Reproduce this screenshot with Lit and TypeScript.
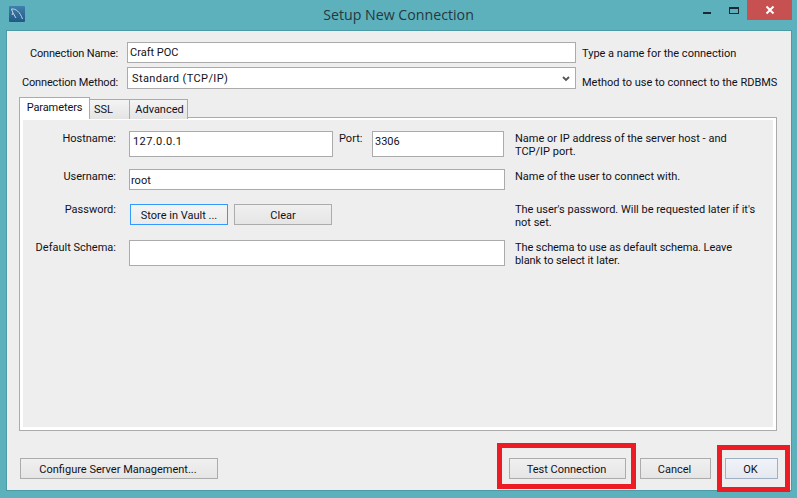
import { LitElement, html, css } from 'lit';
import { customElement } from 'lit/decorators.js';

@customElement('app-root')
export class AppRoot extends LitElement {
  static styles = css`
    :host {
      display: block;
      width: 797px;
      height: 498px;
      background: #5cb1bc;
      font-family: Roboto, 'Noto Sans', sans-serif;
      font-size: 11px;
      line-height: 14px;
      color: #111119;
      overflow: hidden;
      position: relative;
    }
    .titlebar {
      height: 30px;
      display: grid;
      grid-template-columns: 1fr auto 1fr;
    }
    .logo {
      width: 16px;
      height: 16px;
      margin: 6px 0 0 9px;
      display: block;
    }
    .title {
      font-family: 'Open Sans', sans-serif;
      font-size: 14.2px;
      line-height: 30px;
      color: #27383d;
    }
    .controls {
      display: flex;
      justify-content: flex-end;
      align-items: flex-start;
      margin-right: 5px;
    }
    .min {
      width: 8px;
      height: 2px;
      background: #1a2a30;
      margin: 12px 18px 0 0;
    }
    .max {
      box-sizing: border-box;
      width: 10px;
      height: 7px;
      border: 1px solid #1a2a30;
      border-top-width: 2px;
      margin: 7px 8px 0 0;
    }
    .close {
      width: 45px;
      height: 20px;
      background: #c75050;
      display: flex;
      align-items: center;
      justify-content: center;
    }
    .window {
      box-sizing: border-box;
      margin: 0 5px 0 6px;
      height: 461px;
      background: #eeeeee;
      border: 1px solid #4c9aa5;
      padding: 11px 13px 0 12px;
    }
    .top-row {
      display: grid;
      grid-template-columns: 108px 449px 1fr;
      height: 21px;
    }
    .top-row + .top-row {
      margin-top: 4px;
      height: 22px;
    }
    .top-label {
      text-align: right;
      padding: 5px 9px 0 0;
      white-space: nowrap;
      letter-spacing: -0.15px;
    }
    .hint {
      padding: 5px 0 0 6px;
      white-space: nowrap;
    }
    .top-row + .top-row .top-label,
    .top-row + .top-row .hint {
      padding-top: 9px;
    }
    .input {
      box-sizing: border-box;
      background: #fff;
      border: 1px solid #ababab;
      white-space: nowrap;
    }
    .name {
      height: 21px;
      line-height: 20px;
      padding-left: 2px;
    }
    .method {
      height: 22px;
      padding: 2px 5px 0 4px;
      display: flex;
      justify-content: space-between;
      align-items: center;
      letter-spacing: 0.4px;
    }
    .tabs {
      display: flex;
      align-items: flex-start;
      height: 20px;
      margin-top: 8px;
      position: relative;
    }
    .tab {
      box-sizing: border-box;
      height: 20px;
      margin-top: 2px;
      margin-left: -1px;
      border: 1px solid #ababab;
      border-bottom: none;
      background: linear-gradient(#f4f4f4, #e4e4e4);
      line-height: 20px;
      text-align: center;
    }
    .tab.on {
      width: 71px;
      height: 22px;
      margin: 0;
      background: #fff;
      line-height: 19px;
      letter-spacing: -0.1px;
      position: relative;
      z-index: 1;
    }
    .tab.ssl {
      width: 41px;
      text-align: left;
      padding-left: 4px;
    }
    .tab.adv {
      width: 59px;
      padding-left: 2px;
    }
    .panel {
      box-sizing: border-box;
      width: 758px;
      height: 314px;
      border: 1px solid #ababab;
      background: #eeeeee;
      box-shadow: inset 3px 0 0 #fff, inset -3px 0 0 #fff, inset 0 -3px 0 #fff, inset 0 2px 0 #fff;
      padding-top: 13px;
    }
    .row {
      display: grid;
      grid-template-columns: 109px 376px 1fr;
    }
    .row .label {
      text-align: right;
      padding: 1px 13px 0 0;
      white-space: nowrap;
    }
    .row .help {
      padding: 1px 0 0 10px;
      line-height: 13px;
      width: 241px;
    }
    .host { margin-bottom: 12px; height: 26px; }
    .user { margin-bottom: 12px; height: 21px; }
    .pass { margin-bottom: 15px; height: 23px; }
    .schema { height: 26px; }
    .schema .help { letter-spacing: -0.08px; }
    .field-group {
      display: flex;
    }
    .tall {
      height: 26px;
      line-height: 19px;
    }
    .host-input {
      width: 204px;
      padding-left: 3px;
      letter-spacing: 0.4px;
    }
    .port-label {
      width: 39px;
      padding: 1px 0 0 6px;
      box-sizing: border-box;
    }
    .port-input {
      width: 132px;
      padding-left: 2px;
    }
    .user-input {
      height: 21px;
      line-height: 21px;
      padding-left: 1px;
    }
    .buttons {
      display: flex;
      gap: 6px;
      padding: 2px 0 0 1px;
    }
    .btn {
      box-sizing: border-box;
      height: 21px;
      line-height: 18px;
      padding-top: 2px;
      border: 1px solid #acacac;
      background: linear-gradient(#f0f0f0, #e5e5e5);
      text-align: center;
      white-space: nowrap;
    }
    .btn.store {
      width: 98px;
      border-color: #3399ff;
      background: linear-gradient(#f4f4f4, #ebebeb);
    }
    .btn.clear {
      width: 98px;
    }
    .actions {
      display: flex;
      justify-content: space-between;
      width: 759px;
      margin-top: 27px;
      padding-left: 1px;
      box-sizing: border-box;
    }
    .actions .btn {
      padding-right: 2px;
    }
    .right-actions {
      display: flex;
      gap: 14px;
    }
    .btn.configure { width: 198px; }
    .btn.test { width: 117px; }
    .btn.cancel { width: 71px; }
    .btn.ok {
      width: 53px;
      border-color: #9fb0c5;
      background: linear-gradient(#f0f4f9, #e5e9ef);
    }
    .mark {
      position: absolute;
      box-sizing: border-box;
      border: 5px solid #ed1c24;
    }
    .mark.m-test {
      left: 497px;
      top: 443px;
      width: 139px;
      height: 46px;
    }
    .mark.m-ok {
      left: 717px;
      top: 445px;
      width: 73px;
      height: 47px;
    }
  `;

  render() {
    return html`
      <div class="titlebar">
        <svg class="logo" viewBox="0 0 16 16">
          <defs>
            <linearGradient id="lg" x1="0" y1="0" x2="0" y2="1">
              <stop offset="0" stop-color="#3f7fae" />
              <stop offset="1" stop-color="#1f5a86" />
            </linearGradient>
          </defs>
          <rect width="16" height="16" rx="1" fill="url(#lg)" />
          <path d="M2.5 3 C7 2.5 11 6 13.5 13 M2.5 3 L4 7 L7 12 M4 7 L3 9" fill="none" stroke="#c8d6df" stroke-width="1" />
        </svg>
        <div class="title">Setup New Connection</div>
        <div class="controls">
          <div class="min"></div>
          <div class="max"></div>
          <div class="close">
            <svg width="10" height="10" viewBox="0 0 10 10">
              <path d="M1.5 1.5 L8.5 8.5 M8.5 1.5 L1.5 8.5" stroke="#fff" stroke-width="2" />
            </svg>
          </div>
        </div>
      </div>
      <div class="window">
        <div class="top-row">
          <div class="top-label">Connection Name:</div>
          <div class="input name">Craft POC</div>
          <div class="hint">Type a name for the connection</div>
        </div>
        <div class="top-row">
          <div class="top-label">Connection Method:</div>
          <div class="input method">
            <span>Standard (TCP/IP)</span>
            <svg width="8" height="6" viewBox="0 0 8 6">
              <path d="M1 1 L4 4 L7 1" fill="none" stroke="#555" stroke-width="1.8" />
            </svg>
          </div>
          <div class="hint">Method to use to connect to the RDBMS</div>
        </div>
        <div class="tabs">
          <div class="tab on">Parameters</div>
          <div class="tab ssl">SSL</div>
          <div class="tab adv">Advanced</div>
        </div>
        <div class="panel">
          <div class="row host">
            <div class="label">Hostname:</div>
            <div class="field-group">
              <div class="input tall host-input">127.0.0.1</div>
              <div class="port-label">Port:</div>
              <div class="input tall port-input">3306</div>
            </div>
            <div class="help">Name or IP address of the server host - and TCP/IP port.</div>
          </div>
          <div class="row user">
            <div class="label">Username:</div>
            <div class="input user-input">root</div>
            <div class="help">Name of the user to connect with.</div>
          </div>
          <div class="row pass">
            <div class="label">Password:</div>
            <div class="buttons">
              <div class="btn store">Store in Vault ...</div>
              <div class="btn clear">Clear</div>
            </div>
            <div class="help">The user's password. Will be requested later if it's not set.</div>
          </div>
          <div class="row schema">
            <div class="label">Default Schema:</div>
            <div class="input tall"></div>
            <div class="help">The schema to use as default schema. Leave blank to select it later.</div>
          </div>
        </div>
        <div class="actions">
          <div class="btn configure">Configure Server Management...</div>
          <div class="right-actions">
            <div class="btn test">Test Connection</div>
            <div class="btn cancel">Cancel</div>
            <div class="btn ok">OK</div>
          </div>
        </div>
      </div>
      <div class="mark m-test"></div>
      <div class="mark m-ok"></div>
    `;
  }
}
